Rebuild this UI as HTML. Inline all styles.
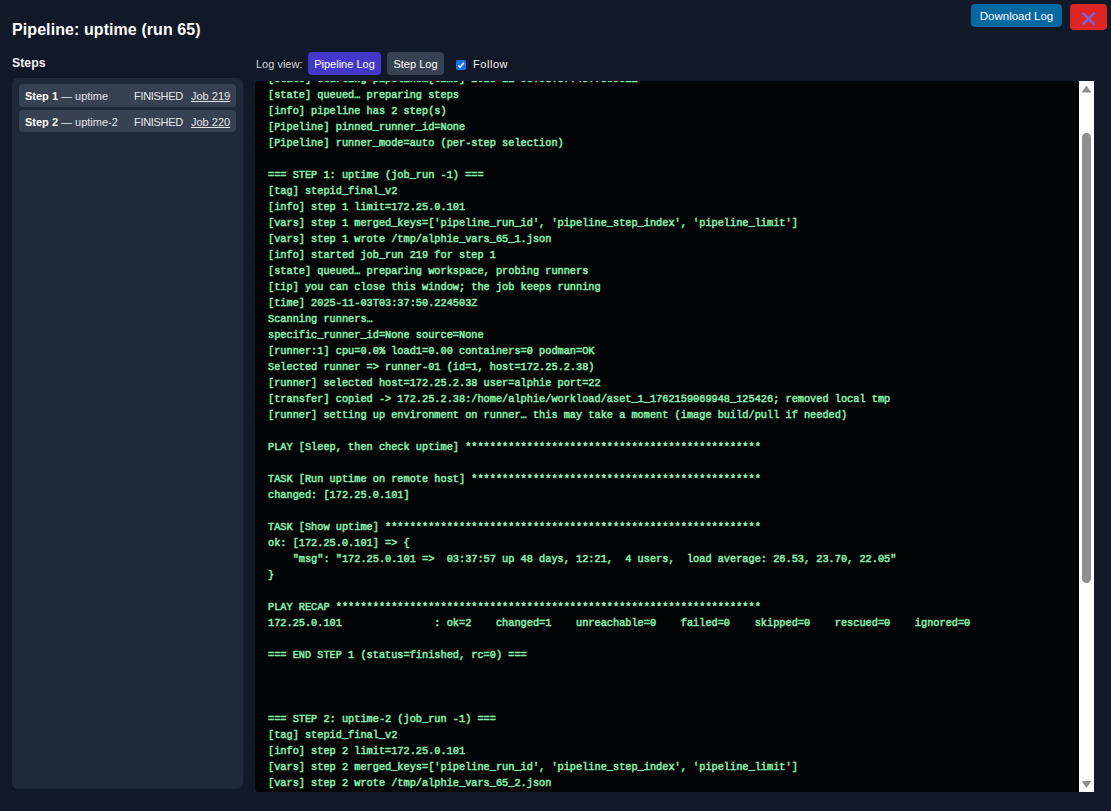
<!DOCTYPE html>
<html><head><meta charset="utf-8">
<style>
*{box-sizing:border-box;margin:0;padding:0}
html,body{width:1111px;height:811px;overflow:hidden;background:#111827;font-family:"Liberation Sans",sans-serif;color:#e5e7eb}
.abs{position:absolute}
#title{left:12px;top:21px;font-size:16px;font-weight:bold;letter-spacing:0.08px;color:#fff;white-space:nowrap}
#dl{left:971px;top:4px;width:91px;height:23px;background:#0369a1;border-radius:4px;color:#fff;font-size:11.5px;text-align:center;line-height:24px}
#close{left:1070px;top:4px;width:37px;height:26px;background:#dc2626;border-radius:4px}
#steps{left:12px;top:56px;font-size:12.3px;font-weight:bold;color:#f3f4f6}
#side{left:12px;top:78px;width:231px;height:711px;background:#1f2937;border-radius:6px}
.item{position:absolute;left:7px;width:217px;height:23px;background:#374151;border-radius:4px;font-size:11px;color:#e5e7eb;line-height:25px;white-space:nowrap}
.item b{position:absolute;left:6px;color:#fff}
.item .st{position:absolute;left:115px;letter-spacing:-0.3px}
.item u{position:absolute;left:172px}
#lv{left:256px;top:58px;font-size:11px;color:#d1d5db}
#bp{left:308px;top:52px;width:73px;height:23px;background:#4338ca;border-radius:4px;color:#fff;font-size:11px;text-align:center;line-height:25px}
#bs{left:387px;top:52px;width:57px;height:23px;background:#374151;border-radius:4px;color:#fff;font-size:11px;text-align:center;line-height:25px}
#cb{left:456px;top:60px;width:10px;height:10px;background:#1473f0;border-radius:2px}
#fw{left:473px;top:58px;font-size:11px;letter-spacing:0.55px;color:#f3f4f6}
#log{left:255px;top:81px;width:839px;height:711px;background:#030405;border-radius:4px;overflow:hidden}
#pre{position:absolute;left:13px;top:-10px;font-family:"Liberation Mono",monospace;font-size:10.27px;line-height:16px;color:#86efac;-webkit-text-stroke:0.5px #86efac;white-space:pre}
#sb{left:1079px;top:81px;width:15px;height:711px;background:#fdfdfd}
#thumb{left:1082px;top:133px;width:9px;height:450px;background:#8f8f8f;border-radius:5px}
</style></head><body>
<div id="title" class="abs">Pipeline: uptime (run 65)</div>
<div id="dl" class="abs">Download Log</div>
<div id="close" class="abs"><svg width="37" height="26" viewBox="0 0 37 26"><path d="M13.2 9.4L24 19.8M24 9.4L13.2 19.8" stroke="#7d63dc" stroke-width="2.3" stroke-linecap="round" fill="none"/></svg></div>
<div id="steps" class="abs">Steps</div>
<div id="side" class="abs">
  <div class="item" style="top:6px"><b>Step 1</b><span style="position:absolute;left:42px">— uptime</span><span class="st">FINISHED</span><u>Job 219</u></div>
  <div class="item" style="top:32px;height:22px"><b>Step 2</b><span style="position:absolute;left:42px">— uptime-2</span><span class="st">FINISHED</span><u>Job 220</u></div>
</div>
<div id="lv" class="abs">Log view:</div>
<div id="bp" class="abs">Pipeline Log</div>
<div id="bs" class="abs">Step Log</div>
<div id="cb" class="abs"><svg width="10" height="10" viewBox="0 0 10 10" style="position:absolute;left:0;top:0"><path d="M2.2 5.2L4.1 7.2L7.9 2.8" stroke="#fff" stroke-width="1.5" fill="none"/></svg></div>
<div id="fw" class="abs">Follow</div>
<div id="log" class="abs"><div id="pre">[state] starting pipeline…[time] 2025-11-03T03:37:49.780951Z
[state] queued… preparing steps
[info] pipeline has 2 step(s)
[Pipeline] pinned_runner_id=None
[Pipeline] runner_mode=auto (per-step selection)

=== STEP 1: uptime (job_run -1) ===
[tag] stepid_final_v2
[info] step 1 limit=172.25.0.101
[vars] step 1 merged_keys=['pipeline_run_id', 'pipeline_step_index', 'pipeline_limit']
[vars] step 1 wrote /tmp/alphie_vars_65_1.json
[info] started job_run 219 for step 1
[state] queued… preparing workspace, probing runners
[tip] you can close this window; the job keeps running
[time] 2025-11-03T03:37:50.224503Z
Scanning runners…
specific_runner_id=None source=None
[runner:1] cpu=0.0% load1=0.00 containers=0 podman=OK
Selected runner => runner-01 (id=1, host=172.25.2.38)
[runner] selected host=172.25.2.38 user=alphie port=22
[transfer] copied -> 172.25.2.38:/home/alphie/workload/aset_1_1762159069948_125426; removed local tmp
[runner] setting up environment on runner… this may take a moment (image build/pull if needed)

PLAY [Sleep, then check uptime] ************************************************

TASK [Run uptime on remote host] ***********************************************
changed: [172.25.0.101]

TASK [Show uptime] *************************************************************
ok: [172.25.0.101] => {
    "msg": "172.25.0.101 =>  03:37:57 up 48 days, 12:21,  4 users,  load average: 26.53, 23.70, 22.05"
}

PLAY RECAP *********************************************************************
172.25.0.101               : ok=2    changed=1    unreachable=0    failed=0    skipped=0    rescued=0    ignored=0

=== END STEP 1 (status=finished, rc=0) ===



=== STEP 2: uptime-2 (job_run -1) ===
[tag] stepid_final_v2
[info] step 2 limit=172.25.0.101
[vars] step 2 merged_keys=['pipeline_run_id', 'pipeline_step_index', 'pipeline_limit']
[vars] step 2 wrote /tmp/alphie_vars_65_2.json
[info] started job_run 220 for step 2
</div></div>
<div id="sb" class="abs"><svg width="15" height="711" style="position:absolute;left:0;top:0"><path d="M3.6 11L7.5 5.5L11.4 11Z" fill="#8f8f8f" stroke="#8f8f8f" stroke-width="1.2" stroke-linejoin="round"/><path d="M3.6 700.5L7.5 706L11.4 700.5Z" fill="#8f8f8f" stroke="#8f8f8f" stroke-width="1.2" stroke-linejoin="round"/></svg></div>
<div id="thumb" class="abs"></div>
</body></html>
